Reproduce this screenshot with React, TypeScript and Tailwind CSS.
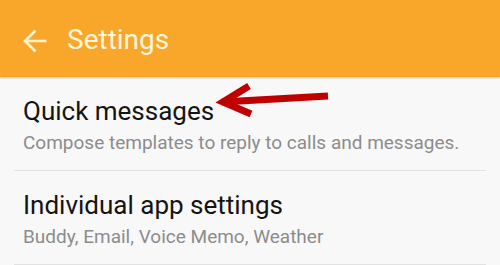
interface SettingRowProps {
  title: string;
  subtitle: string;
}

const SettingRow = ({ title, subtitle }: SettingRowProps) => (
  <div className="mx-[14px] border-b border-[#e2e2e2] px-[9px] pt-[19px] pb-[16px]">
    <p className="text-[26px] leading-[30px] text-[#141414]">{title}</p>
    <p className="mt-[5px] text-[19px] leading-[23px] text-[#8c8c8c]">{subtitle}</p>
  </div>
);

export default function App() {
  return (
    <div className="relative h-[265px] w-[500px] overflow-hidden bg-[#f8f8f8] font-['Roboto',sans-serif]">
      <header className="flex h-[77px] items-center bg-[#f9a72b] shadow-[0_1px_2px_rgba(0,0,0,0.18)]">
        <svg className="ml-[23px] mt-[5px]" width="24" height="24" viewBox="0 0 24 24" fill="none">
          <path d="M23.5 12 H2 M12.5 1.5 L2 12 L12.5 22.5" stroke="#fff4cf" strokeWidth="2.6" />
        </svg>
        <h1 className="ml-[20px] mt-[2px] text-[28px] leading-[32px] text-[#fff6dc]">Settings</h1>
      </header>

      <SettingRow
        title="Quick messages"
        subtitle="Compose templates to reply to calls and messages."
      />
      <SettingRow
        title="Individual app settings"
        subtitle="Buddy, Email, Voice Memo, Weather"
      />

      {/* annotation arrow */}
      <svg
        className="pointer-events-none absolute left-[210px] top-[80px]"
        width="125"
        height="40"
        viewBox="0 0 125 40"
      >
        <path d="M12 22 L118 16" stroke="#c00000" strokeWidth="7" fill="none" />
        <path
          d="M39 6 L13 22 L41 34"
          stroke="#c00000"
          strokeWidth="7"
          fill="none"
          strokeLinejoin="miter"
        />
      </svg>
    </div>
  );
}
